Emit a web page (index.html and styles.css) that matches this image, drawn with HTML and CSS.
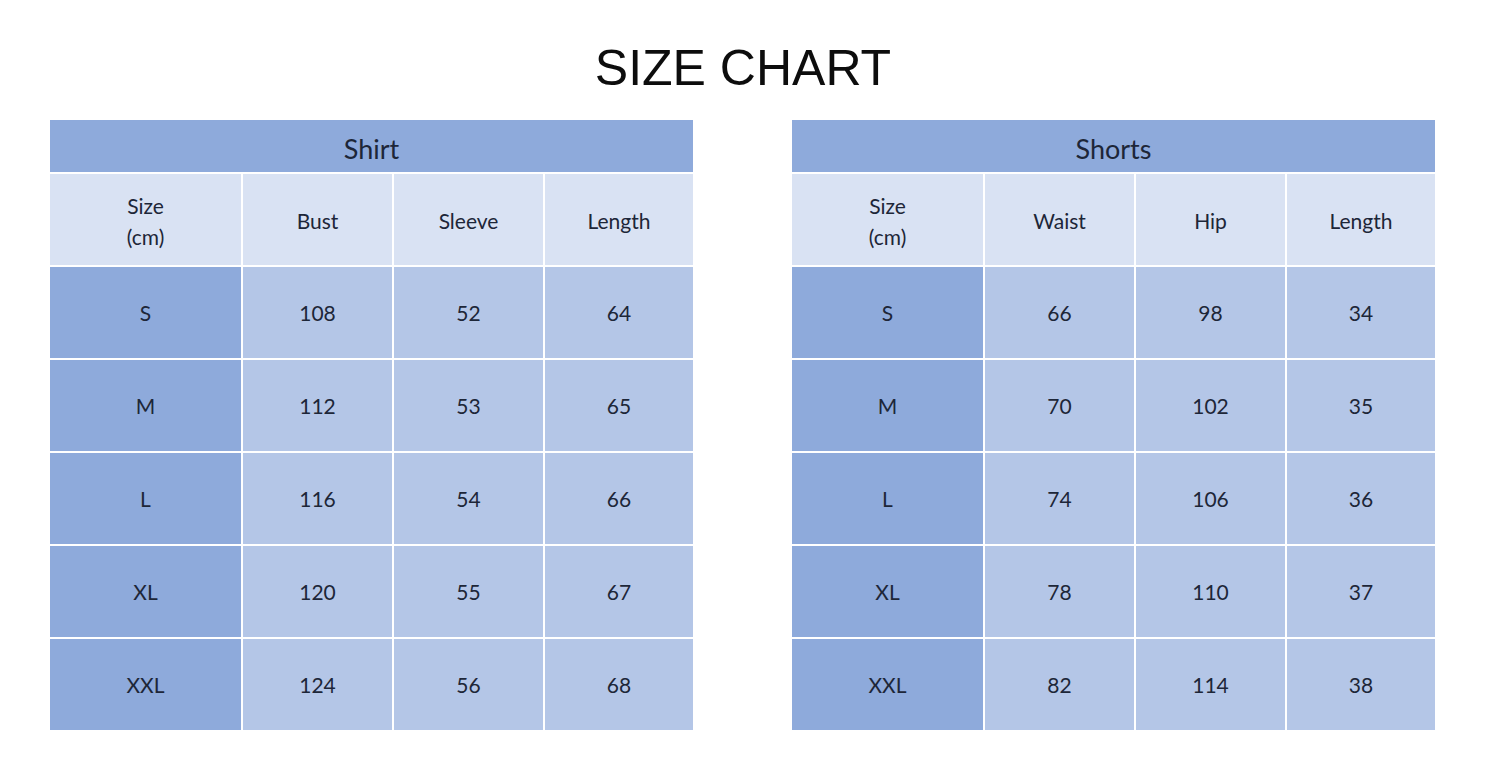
FILE: index.html
```html
<!DOCTYPE html>
<html>
<head>
<meta charset="utf-8">
<link rel="stylesheet" href="styles.css">
</head>
<body>
<div class="page">
  <h1 class="title">SIZE CHART</h1>
  <div class="tables">
    <div class="chart">
      <div class="cap">Shirt</div>
      <div class="hd">Size<br>(cm)</div><div class="hd">Bust</div><div class="hd">Sleeve</div><div class="hd">Length</div>
      <div class="sz">S</div><div class="c">108</div><div class="c">52</div><div class="c">64</div>
      <div class="sz">M</div><div class="c">112</div><div class="c">53</div><div class="c">65</div>
      <div class="sz">L</div><div class="c">116</div><div class="c">54</div><div class="c">66</div>
      <div class="sz">XL</div><div class="c">120</div><div class="c">55</div><div class="c">67</div>
      <div class="sz">XXL</div><div class="c">124</div><div class="c">56</div><div class="c">68</div>
    </div>
    <div class="chart">
      <div class="cap">Shorts</div>
      <div class="hd">Size<br>(cm)</div><div class="hd">Waist</div><div class="hd">Hip</div><div class="hd">Length</div>
      <div class="sz">S</div><div class="c">66</div><div class="c">98</div><div class="c">34</div>
      <div class="sz">M</div><div class="c">70</div><div class="c">102</div><div class="c">35</div>
      <div class="sz">L</div><div class="c">74</div><div class="c">106</div><div class="c">36</div>
      <div class="sz">XL</div><div class="c">78</div><div class="c">110</div><div class="c">37</div>
      <div class="sz">XXL</div><div class="c">82</div><div class="c">114</div><div class="c">38</div>
    </div>
  </div>
</div>
</body>
</html>
```
FILE: styles.css
```css
html, body {
  margin: 0;
  padding: 0;
  background: #ffffff;
}
.page {
  width: 1498px;
  height: 780px;
  padding-top: 38px;
  box-sizing: border-box;
}
.title {
  margin: 0;
  height: 82px;
  font-family: "Liberation Sans", Arial, sans-serif;
  font-weight: normal;
  font-size: 50px;
  line-height: 60px;
  color: #0d0d0d;
  text-align: center;
  width: 1486px;
}
.tables {
  display: flex;
  gap: 99px;
  padding-left: 50px;
}
.chart {
  display: grid;
  grid-template-columns: 191px 149px 149px 148px;
  grid-template-rows: 52px 91px repeat(5, 91px);
  gap: 2px;
  background: #ffffff;
  font-family: Lato, "Open Sans", sans-serif;
  color: #1d2638;
}
.chart > div {
  display: flex;
  align-items: center;
  justify-content: center;
  text-align: center;
  font-size: 21px;
  line-height: 31px;
}
.cap {
  grid-column: 1 / -1;
  background: #8eaadb;
  font-size: 27px !important;
  padding-top: 4px;
  box-sizing: border-box;
}
.hd {
  background: #d9e2f3;
  padding-top: 2px;
  box-sizing: border-box;
}
.sz {
  background: #8eaadb;
}
.c {
  background: #b4c6e7;
}
```
